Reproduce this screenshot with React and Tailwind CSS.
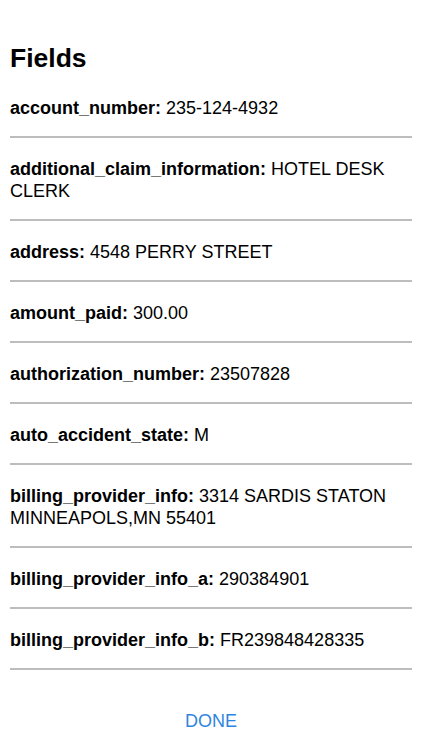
const fields = [
  { label: "account_number", value: "235-124-4932" },
  { label: "additional_claim_information", value: "HOTEL DESK CLERK" },
  { label: "address", value: "4548 PERRY STREET" },
  { label: "amount_paid", value: "300.00" },
  { label: "authorization_number", value: "23507828" },
  { label: "auto_accident_state", value: "M" },
  { label: "billing_provider_info", value: "3314 SARDIS STATON MINNEAPOLS,MN 55401" },
  { label: "billing_provider_info_a", value: "290384901" },
  { label: "billing_provider_info_b", value: "FR239848428335" },
];

export default function App() {
  return (
    <div className="min-h-[750px] w-[422px] bg-white px-[10px] text-black font-['Liberation_Sans',Arial,sans-serif]">
      <h1 className="pt-[43px] pb-[4px] text-[26.5px] leading-[30px] font-bold">Fields</h1>

      <ul>
        {fields.map((f) => (
          <li
            key={f.label}
            className="pt-[20px] pb-[17px] text-[18px] leading-[22px] border-b-2 border-[#bdbdbd]"
          >
            <span className="font-bold">{f.label}:</span> {f.value}
          </li>
        ))}
      </ul>

      <div className="flex justify-center pt-[40px]">
        <button className="text-[18px] leading-[22px] text-[#2f86de]">DONE</button>
      </div>
    </div>
  );
}
